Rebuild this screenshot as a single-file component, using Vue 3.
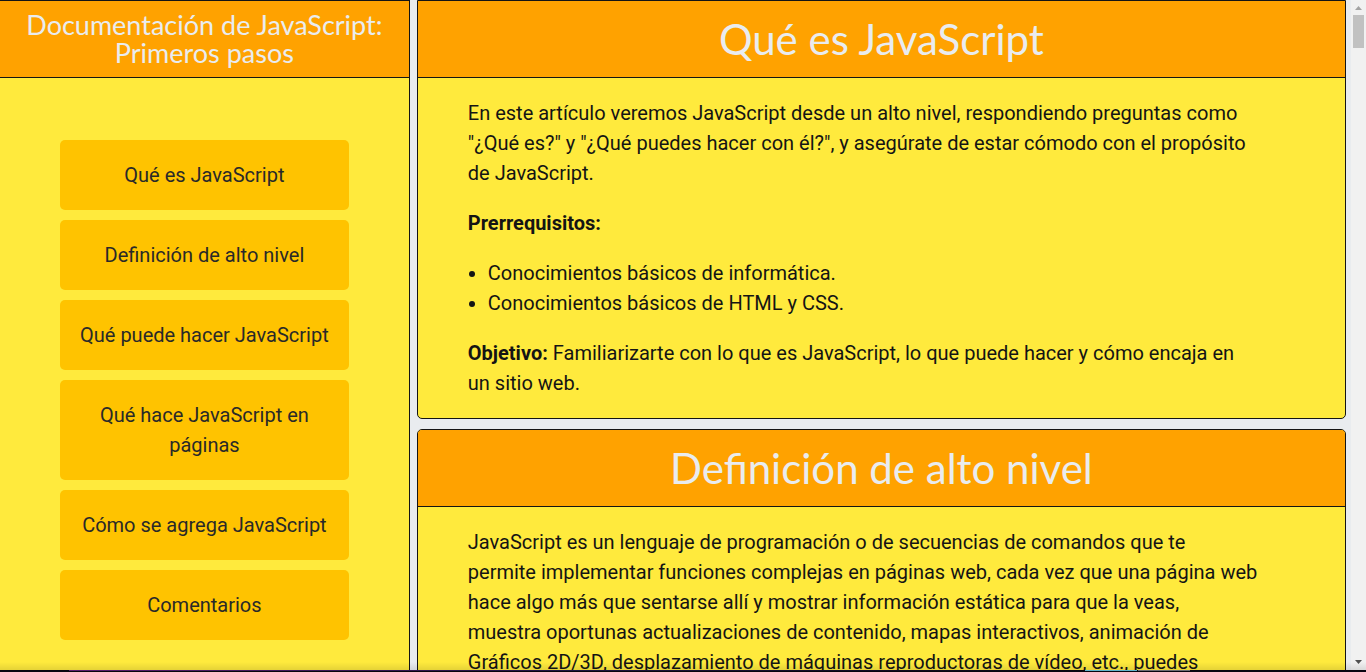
<script setup>
const links = [
  { id: 'que-es', text: 'Qué es JavaScript' },
  { id: 'definicion', text: 'Definición de alto nivel' },
  { id: 'que-puede', text: 'Qué puede hacer JavaScript' },
  { id: 'que-hace', text: 'Qué hace JavaScript en páginas' },
  { id: 'como-se-agrega', text: 'Cómo se agrega JavaScript' },
  { id: 'comentarios', text: 'Comentarios' },
]
</script>

<template>
  <div class="page">
    <div class="body">
      <nav class="sidebar">
        <h1 class="bar sidebar-title">
          <span>Documentación de JavaScript: Primeros pasos</span>
        </h1>
        <ul class="links">
          <li v-for="link in links" :key="link.id">
            <a :href="'#' + link.id">{{ link.text }}</a>
          </li>
        </ul>
      </nav>

      <main class="content">
        <section id="que-es" class="card first">
          <h2 class="bar">Qué es JavaScript</h2>
          <div class="text">
            <p>
              En este artículo veremos JavaScript desde un alto nivel, respondiendo preguntas como<br>
              "¿Qué es?" y "¿Qué puedes hacer con él?", y asegúrate de estar cómodo con el propósito<br>
              de JavaScript.
            </p>
            <p><strong>Prerrequisitos:</strong></p>
            <ul>
              <li>Conocimientos básicos de informática.</li>
              <li>Conocimientos básicos de HTML y CSS.</li>
            </ul>
            <p>
              <strong>Objetivo:</strong> Familiarizarte con lo que es JavaScript, lo que puede hacer y cómo encaja en<br>
              un sitio web.
            </p>
          </div>
        </section>

        <section id="definicion" class="card">
          <h2 class="bar">Definición de alto nivel</h2>
          <div class="text">
            <p>
              JavaScript es un lenguaje de programación o de secuencias de comandos que te<br>
              permite implementar funciones complejas en páginas web, cada vez que una página web<br>
              hace algo más que sentarse allí y mostrar información estática para que la veas,<br>
              muestra oportunas actualizaciones de contenido, mapas interactivos, animación de<br>
              Gráficos 2D/3D, desplazamiento de máquinas reproductoras de vídeo, etc., puedes
            </p>
          </div>
        </section>
      </main>

      <div class="scrollbar" aria-hidden="true">
        <svg width="15" height="15" viewBox="0 0 15 15"><path d="M4 10h7L7.500 6z" fill="#a3a3a3" /></svg>
        <div class="thumb"></div>
        <svg class="down" width="15" height="15" viewBox="0 0 15 15"><path d="M4 5h7L7.500 9z" fill="#505050" /></svg>
      </div>
    </div>
    <div class="dock"><i class="purple"></i><i class="cyan"></i><i class="grey"></i></div>
  </div>
</template>

<style>
body {
  margin: 0;
  background: #e9ecef;
}
</style>

<style scoped>
.page {
  display: flex;
  flex-direction: column;
  height: 100vh;
  overflow: hidden;
  background: #e9ecef;
  color: #141414;
  font: 20px/30px Roboto, sans-serif;
}

.body {
  position: relative;
  display: flex;
  flex: 1;
  min-height: 0;
  overflow: hidden;
}

.body::after {
  content: '';
  position: absolute;
  inset: auto 0 0;
  height: 8px;
  background: linear-gradient(transparent, rgba(0, 0, 0, 0.1));
}

.bar {
  display: flex;
  align-items: center;
  justify-content: center;
  box-sizing: border-box;
  margin: 0;
  background: #ffa200;
  border-bottom: 1px solid #141414;
  color: #e9ecef;
  font-family: Lato, sans-serif;
  font-weight: 400;
}

.sidebar {
  box-sizing: border-box;
  width: 30%;
  flex: none;
  background: #ffea3d;
  border: solid #141414;
  border-width: 1px 1px 0 0;
}

.sidebar-title {
  height: 77px;
  padding: 0 20px;
  font-size: 27px;
  line-height: 28px;
  text-align: center;
}

.links {
  display: flex;
  flex-direction: column;
  gap: 10px;
  margin: 0;
  padding: 62px 60px 0;
  list-style: none;
}

.links a {
  display: block;
  padding: 20px 15px;
  border-radius: 5px;
  background: #ffc300;
  color: #292929;
  text-align: center;
  text-decoration: none;
}

.content {
  flex: 1;
  min-width: 0;
  margin: 0 5px 0 7px;
}

.card {
  overflow: hidden;
  margin-bottom: 10px;
  background: #ffea3d;
  border: 1px solid #141414;
  border-radius: 5px;
}

.first {
  border-radius: 0 0 5px 5px;
}

.card .bar {
  height: 77px;
  font-size: 42px;
  line-height: 50px;
}

.text {
  padding: 20px 50px;
  white-space: nowrap;
}

.text p {
  margin: 0 0 20px;
}

.text p:last-child {
  margin-bottom: 0;
}

.text ul {
  margin: 0 0 20px;
  padding-left: 20px;
}

.scrollbar {
  display: flex;
  flex-direction: column;
  flex: none;
  width: 15px;
  background: #f1f1f1;
}

.thumb {
  height: 33px;
  margin: 0 2px;
  background: #c1c1c1;
}

.down {
  margin-top: auto;
}

.dock {
  display: flex;
  gap: 1px;
  flex: none;
  height: 2px;
  padding: 0 176px 0 69px;
  background: #08040f;
}

.dock i {
  width: 52px;
  height: 1px;
}

.dock .purple {
  flex: 1;
  background: linear-gradient(90deg, #5c1f6e, #1c1440 50%, #08040f);
}

.dock .cyan {
  background: #5fb4cc;
}

.dock .grey {
  background: #6c6c74;
}
</style>
